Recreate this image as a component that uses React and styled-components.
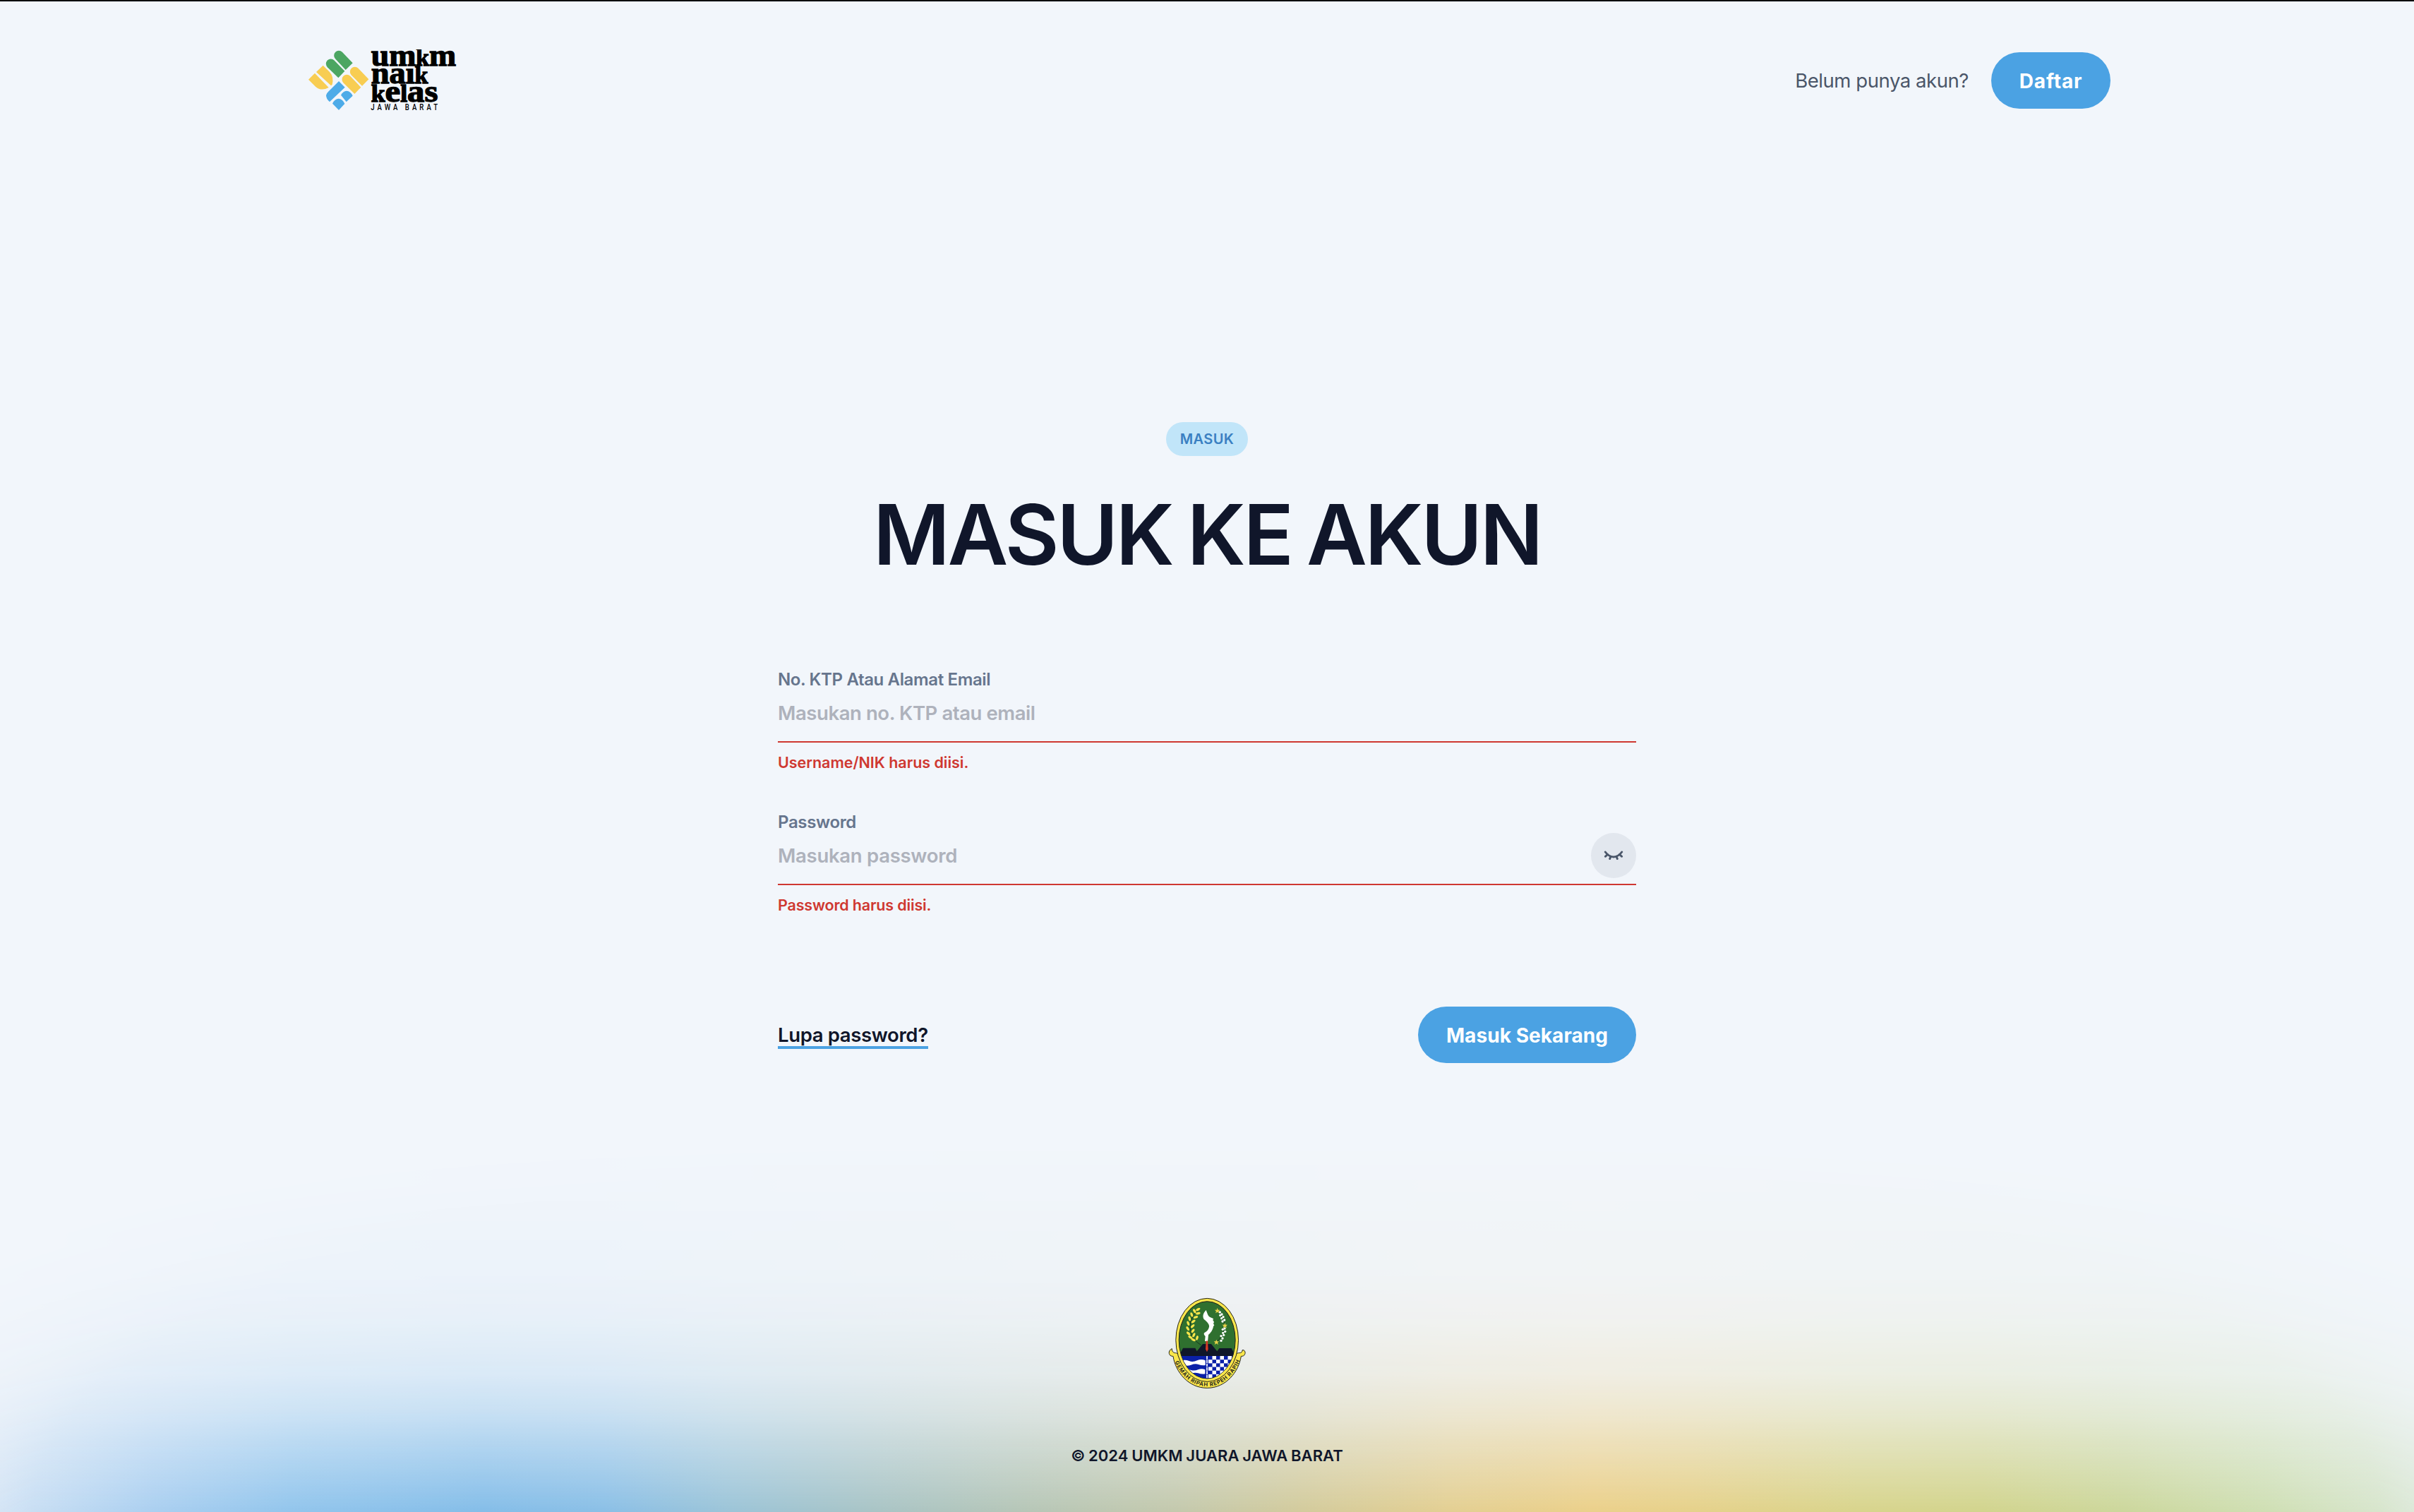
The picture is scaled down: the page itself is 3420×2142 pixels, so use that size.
import React from "react";
import styled, { createGlobalStyle } from "styled-components";

const GlobalStyle = createGlobalStyle`
  *, *::before, *::after { box-sizing: border-box; }
  body { margin: 0; background: #f2f6fb; }
  body, input, button { font-family: Inter, "Liberation Sans", sans-serif; }
`;

const Page = styled.div`
  position: relative;
  isolation: isolate;
  display: flex;
  flex-direction: column;
  align-items: center;
  width: 100%;
  min-height: 2142px;
  border-top: 2px solid #05070c;
  background: #f2f6fb;
  color: #10162a;
`;

const Glow = styled.div`
  position: absolute;
  z-index: -1;
  left: 0;
  right: 0;
  bottom: 0;
  height: 542px;
  background: linear-gradient(
    90deg,
    #d0e2f4 0%, #aacff0 6.4%, #92c5ec 12%, #84bde8 20%, #8abfe6 25%,
    #9bc4d8 30%, #a8c4c6 36%, #b5c6b8 42%, #c4c9ac 49%, #d3cb9c 54%,
    #e3cf92 60%, #ebd08a 66%, #e6d18a 70%, #d8d48c 77%, #d2d48d 82%,
    #ccd79c 88%, #cfdfb4 94%, #dae7d4 100%
  );
  mask-image:
    linear-gradient(
      180deg,
      transparent 0%, rgba(0, 0, 0, 0.015) 15%, rgba(0, 0, 0, 0.05) 38%,
      rgba(0, 0, 0, 0.1) 50%, rgba(0, 0, 0, 0.22) 64%, rgba(0, 0, 0, 0.37) 73%,
      rgba(0, 0, 0, 0.67) 86%, #000 100%
    ),
    radial-gradient(ellipse 64% 130% at 50% 100%, #000 76%, transparent 96%);
  mask-composite: intersect;
`;

const Header = styled.header`
  display: flex;
  align-items: center;
  justify-content: space-between;
  width: 2560px;
  height: 80px;
  margin-top: 72px;
`;

const HeaderActions = styled.div`
  display: flex;
  align-items: center;
  gap: 32px;
`;

const Prompt = styled.span`
  font-size: 27.5px;
  letter-spacing: -0.44px;
  line-height: 40px;
  color: #4b5669;
`;

const PillButton = styled.button`
  display: flex;
  align-items: center;
  justify-content: center;
  width: ${(p) => p.$width}px;
  height: 80px;
  padding: 1px 0 0;
  border: 0;
  border-radius: 40px;
  background: #4ba2e3;
  color: #fff;
  font-size: 28px;
  font-weight: 700;
  line-height: 40px;
  letter-spacing: ${(p) => p.$tracking}px;
`;

const Main = styled.main`
  display: flex;
  flex-direction: column;
  align-items: center;
  width: 1216px;
  margin-top: 444px;
`;

const Badge = styled.span`
  display: flex;
  align-items: center;
  justify-content: center;
  width: 116px;
  height: 48px;
  border-radius: 24px;
  background: #c1e5f9;
  color: #3a80c2;
  font-size: 20px;
  font-weight: 600;
  letter-spacing: 0.37px;
`;

const Title = styled.h1`
  margin: 51px 0 0;
  font-size: 118px;
  font-weight: 600;
  line-height: 120px;
  letter-spacing: -3.3px;
  word-spacing: -5px;
  white-space: nowrap;
`;

const Form = styled.form`
  display: flex;
  flex-direction: column;
  gap: 52px;
  width: 100%;
  margin-top: 129px;
`;

const Field = styled.div`
  display: flex;
  flex-direction: column;
`;

const Label = styled.label`
  height: 32px;
  font-size: 24px;
  font-weight: 600;
  line-height: 34px;
  letter-spacing: -0.36px;
  color: #66758d;
`;

const Control = styled.div`
  display: flex;
  align-items: center;
  height: 74px;
  padding-bottom: 8px;
  border-bottom: 2px solid #cf3831;
`;

const Input = styled.input`
  flex: 1;
  min-width: 0;
  height: 64px;
  padding: 0;
  border: 0;
  outline: 0;
  background: transparent;
  font-size: 27.5px;
  font-weight: 600;
  letter-spacing: ${(p) => p.$tracking}px;
  &::placeholder { color: #aeb2bc; opacity: 1; }
`;

const RevealButton = styled.button`
  display: flex;
  align-items: center;
  justify-content: center;
  width: 64px;
  height: 64px;
  padding: 0;
  border: 0;
  border-radius: 50%;
  background: #e2e7ee;
  color: #4a5669;
`;

const ErrorText = styled.p`
  margin: 12px 0 0;
  font-size: 21.5px;
  font-weight: 600;
  line-height: 32px;
  letter-spacing: ${(p) => p.$tracking}px;
  color: #cf3831;
`;

const Actions = styled.div`
  display: flex;
  align-items: center;
  justify-content: space-between;
  margin-top: 76px;
`;

const ForgotLink = styled.a`
  margin-top: 4px;
  border-bottom: 4px solid #4ba2e3;
  color: #10162a;
  font-size: 27.5px;
  font-weight: 600;
  line-height: 32px;
  letter-spacing: -0.36px;
`;

const Footer = styled.footer`
  display: flex;
  flex-direction: column;
  align-items: center;
  gap: 79px;
  margin-top: auto;
  padding-bottom: 64px;
`;

const Copyright = styled.p`
  margin: 0;
  font-size: 22px;
  font-weight: 600;
  line-height: 32px;
  letter-spacing: 0.08px;
  word-spacing: -1px;
`;

const LogoSvg = styled.svg`
  display: block;
  width: 213.4px;
  height: 87.4px;
  margin-left: 5px;
`;

const EmblemSvg = styled.svg`
  display: block;
  width: 110px;
  height: 129.4px;
`;

function Logo() {
  const word = {
    fontFamily: '"Liberation Serif", serif',
    fontWeight: 700,
    fontSize: 134,
    stroke: "#000",
    strokeWidth: 4,
  };
  return (
    <LogoSvg viewBox="45 60 640 262" role="img" aria-label="umkm naik kelas Jawa Barat">
      <g fill="#4ca662">
        <path d="M165.5 100.5A20.5 20.5 0 0 1 194.5 71.5L239 118L209 147Z" />
        <path d="M131.5 135.5A20.5 20.5 0 0 1 160.5 106.5L205 152L178 181Z" />
      </g>
      <g fill="#f8cd52">
        <path d="M233.5 169.5A20.5 20.5 0 0 1 262.5 140.5L307 187L279 215Z" />
        <path d="M199.5 202.5A20.5 20.5 0 0 1 228.5 173.5L274 221L247 249Z" />
        <path d="M113 128L141 156Q160 177 152 209L147 214L84 156Z" />
        <path d="M78 161L51 188L81 218Q105 239 137 222Z" />
      </g>
      <g fill="#4dabe8">
        <path d="M180 195L206 221L141 283Q126 270 126 255Q127 247 135 240Z" />
        <path d="M189 254Q198 237 213 236Q230 237 239 257L212 283Z" />
        <path d="M153 290Q162 270 180 269Q197 271 205 291L180 318Z" />
      </g>
      <g {...word}>
        <text x="317" y="130" textLength="361" lengthAdjust="spacingAndGlyphs">um<tspan fontSize="98">k</tspan>m</text>
        <text x="317" y="205" textLength="242" lengthAdjust="spacingAndGlyphs">naı<tspan fontSize="98">k</tspan></text>
        <text x="317" y="282" textLength="284" lengthAdjust="spacingAndGlyphs"><tspan fontSize="98">k</tspan>e<tspan fontSize="98">l</tspan>as</text>
      </g>
      <text
        transform="translate(316 318) scale(.8 1)"
        fontFamily="Roboto, sans-serif"
        fontWeight="500"
        fontSize="36"
        textLength="355"
      >
        JAWA BARAT
      </text>
    </LogoSvg>
  );
}

function ClosedEye() {
  return (
    <svg width="28" height="16" viewBox="0 0 28 16" fill="none" stroke="currentColor" strokeWidth="2.9" strokeLinecap="round">
      <path d="M2.3 3Q7.5 10 14 10T25.7 3" />
      <path d="M5.5 6.5L2.4 9.3M10 9.3L8.7 12.6M18 9.3L19.3 12.6M22.5 6.5L25.6 9.3" />
    </svg>
  );
}

const LEAVES = [
  [172, 105, -30], [157, 112, 60], [172, 122, -15], [145, 127, 70], [162, 138, -20],
  [136, 144, 75], [152, 156, -35], [130, 164, 70], [149, 176, -45], [128, 186, 60],
  [150, 196, -55], [131, 207, 45], [154, 214, -65], [139, 223, 35], [168, 226, -75], [152, 234, 25],
];
const COTTON = [
  [265, 117], [273, 126], [266, 130], [279, 137], [272, 143], [284, 150], [276, 156],
  [285, 186], [277, 190], [287, 199], [278, 205], [281, 214], [270, 218], [276, 228], [270, 238],
];
const STARS = [[254, 110], [286, 173], [250, 244]];
const CHECKS = Array.from({ length: 36 }, (_, i) => [i % 6, Math.floor(i / 6)]).filter(([c, r]) => (c + r) % 2 === 1);

function Emblem() {
  return (
    <EmblemSvg viewBox="45 54 330 388" role="img" aria-label="Jawa Barat">
      <defs>
        <clipPath id="shield"><ellipse cx="210.5" cy="235" rx="119" ry="163" /></clipPath>
        <path id="motto" d="M66 307A155 196 0 0 0 355 307" />
      </defs>
      <g stroke="#20211c" strokeWidth="3" fill="#fae64b" strokeLinejoin="round">
        <path d="M84 292C82 292 78 289 74 290C65 288 60 281 61 272C52 275 46 287 50 295C53 303 60 304 66 304C76 370 130 439 210.5 439C291 439 345 370 355 304C361 304 368 303 371 295C375 287 369 275 360 278C361 285 356 290 347 290C343 289 339 292 337 292Z" />
        <ellipse cx="210.5" cy="235" rx="133" ry="177" />
        <ellipse cx="210.5" cy="235" rx="120" ry="164" fill="#2f702f" />
      </g>
      <g clipPath="url(#shield)">
        <rect x="89" y="300" width="244" height="105" fill="#0a20a8" />
        <path d="M100 322Q118 318 134 324T168 322T203 322V342Q188 344 174 339T142 341T100 339ZM104 362Q124 356 140 362T172 361T202 361V379Q186 381 172 376T142 378T104 376Z" fill="#fff" />
        <g fill="#fff">
          {CHECKS.map(([c, r]) => (
            <rect key={`${c}-${r}`} x={216 + c * 16.5} y={303 + r * 15.5} width="16.5" height="15.5" />
          ))}
        </g>
        <path d="M210 303V400" stroke="#fff" strokeWidth="5" strokeDasharray="14 2" />
        <path d="M86 303V285L100 285L108 269H160L167 283L192 252H228L253 283L262 270H314L322 285H336V303Z" fill="#101729" />
      </g>
      <path d="M174 104Q124 150 143 208Q151 235 184 256" fill="none" stroke="#17351c" strokeWidth="3" />
      <g fill="#fae64b">
        {LEAVES.map(([x, y, a]) => (
          <ellipse key={`${x}-${y}`} cx={x} cy={y} rx="10" ry="5" transform={`rotate(${a} ${x} ${y})`} />
        ))}
      </g>
      <path d="M256 112Q314 170 254 242" fill="none" stroke="#17351c" strokeWidth="2.5" />
      <g fill="#fff">
        {COTTON.map(([x, y]) => (
          <circle key={`${x}-${y}`} cx={x} cy={y} r="5" />
        ))}
      </g>
      <g fill="#e8d24a">
        {STARS.map(([x, y]) => (
          <path key={y} transform={`translate(${x} ${y})`} d="M0 -11L3 -3L11 -3L5 3L8 11L0 6L-8 11L-5 3L-11 -3L-3 -3Z" />
        ))}
      </g>
      <path d="M206 108C193 121 190 135 197 147C211 158 221 169 219 179C217 191 208 199 203 202C195 205 195 212 203 219L201 239L213 242L216 213C224 206 235 193 237 177L241 172L237 166L240 158L235 151L237 144L228 140C214 136 213 125 206 108Z" fill="#fff" />
      <path d="M206 240Q210 235 213 241L215 274L210 286L204 274Z" fill="#d63a25" />
      <text fontFamily="Inter, sans-serif" fontWeight="700" fontSize="23" fill="#26261c">
        <textPath href="#motto" startOffset="22" textLength="370">GEMAH RIPAH REPEH RAPIH</textPath>
      </text>
    </EmblemSvg>
  );
}

export default function App() {
  return (
    <>
      <GlobalStyle />
      <Page>
        <Glow />
        <Header>
          <Logo />
          <HeaderActions>
            <Prompt>Belum punya akun?</Prompt>
            <PillButton type="button" $width={169} $tracking={0.8}>Daftar</PillButton>
          </HeaderActions>
        </Header>
        <Main>
          <Badge>MASUK</Badge>
          <Title>MASUK KE AKUN</Title>
          <Form noValidate onSubmit={(e) => e.preventDefault()}>
            <Field>
              <Label htmlFor="identity">No. KTP Atau Alamat Email</Label>
              <Control>
                <Input id="identity" type="text" placeholder="Masukan no. KTP atau email" $tracking={-0.42} />
              </Control>
              <ErrorText $tracking={-0.03}>Username/NIK harus diisi.</ErrorText>
            </Field>
            <Field>
              <Label htmlFor="password">Password</Label>
              <Control>
                <Input id="password" type="password" placeholder="Masukan password" $tracking={-0.28} />
                <RevealButton type="button" aria-label="Password">
                  <ClosedEye />
                </RevealButton>
              </Control>
              <ErrorText $tracking={-0.17}>Password harus diisi.</ErrorText>
            </Field>
            <Actions>
              <ForgotLink>Lupa password?</ForgotLink>
              <PillButton type="submit" $width={309} $tracking={0.06}>Masuk Sekarang</PillButton>
            </Actions>
          </Form>
        </Main>
        <Footer>
          <Emblem />
          <Copyright>© 2024 UMKM JUARA JAWA BARAT</Copyright>
        </Footer>
      </Page>
    </>
  );
}
